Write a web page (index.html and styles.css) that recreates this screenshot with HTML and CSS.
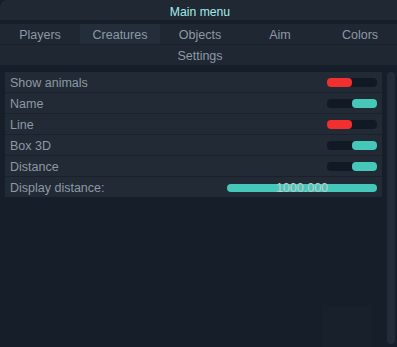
FILE: index.html
```html
<!DOCTYPE html>
<html>
<head>
<meta charset="utf-8">
<link rel="stylesheet" href="styles.css">
</head>
<body>
<div class="window">
  <div class="titlebar">Main menu</div>
  <div class="tabs">
    <div class="tab">Players</div>
    <div class="tab active">Creatures</div>
    <div class="tab">Objects</div>
    <div class="tab">Aim</div>
    <div class="tab">Colors</div>
  </div>
  <div class="subtabs">
    <div class="tab">Settings</div>
  </div>
  <div class="main">
    <div class="panel">
      <div class="row"><span class="label">Show animals</span><span class="toggle off"></span></div>
      <div class="row"><span class="label">Name</span><span class="toggle on"></span></div>
      <div class="row"><span class="label">Line</span><span class="toggle off"></span></div>
      <div class="row"><span class="label">Box 3D</span><span class="toggle on"></span></div>
      <div class="row"><span class="label">Distance</span><span class="toggle on"></span></div>
      <div class="row"><span class="label">Display distance:</span><span class="slider"><span class="slider-value">1000.000</span></span></div>
    </div>
    <div class="scrollbar"></div>
  </div>
  <div class="ghost"></div>
</div>
</body>
</html>
```
FILE: styles.css
```css
html, body {
  margin: 0;
  padding: 0;
  background: #161f29;
  width: 397px;
  height: 347px;
  overflow: hidden;
}
body {
  font-family: "Liberation Sans", Arial, sans-serif;
  font-size: 12.5px;
  color: #8e99a4;
}
.window {
  position: relative;
  width: 397px;
  height: 347px;
}
.titlebar {
  box-sizing: border-box;
  height: 20px;
  line-height: 20px;
  padding-top: 2px;
  background: #1f2833;
  border-top-left-radius: 7px;
  text-align: center;
  color: #a3ece8;
  font-size: 12.2px;
  padding-left: 3px;
}
.tabs {
  margin-top: 4px;
  display: grid;
  grid-template-columns: repeat(5, 80px);
  width: 397px;
  overflow: hidden;
  height: 20px;
  background: #1e2732;
  border-bottom: 1px solid #19212b;
}
.tab {
  box-sizing: border-box;
  text-align: center;
  line-height: 19px;
  padding-top: 2px;
  height: 20px;
  white-space: nowrap;
}
.tab.active {
  background: #232e3a;
}
.subtabs {
  height: 20px;
  background: #1e2732;
  width: 397px;
  overflow: hidden;
}
.subtabs .tab {
  width: 400px;
}
.main {
  display: flex;
  margin-top: 7px;
  padding-left: 5px;
  gap: 5px;
}
.panel {
  width: 377px;
  align-self: flex-start;
  display: flex;
  flex-direction: column;
}
.row {
  height: 20px;
  background: #212a35;
  border-bottom: 1px solid #19222c;
  display: flex;
  align-items: center;
  justify-content: space-between;
  padding: 0 5px;
}
.row:last-child {
  border-bottom: none;
}
.label {
  line-height: 20px;
  padding-top: 1px;
}
.toggle {
  width: 50px;
  height: 9px;
  border-radius: 4px;
  background: #111a24;
  display: flex;
  margin-top: 1px;
}
.toggle::before {
  content: "";
  width: 25px;
  height: 9px;
  border-radius: 4px;
}
.toggle.off::before {
  background: #f22f2f;
}
.toggle.on {
  justify-content: flex-end;
}
.toggle.on::before {
  background: #45c8b9;
}
.slider {
  width: 150px;
  height: 8px;
  border-radius: 4px;
  background: #45c8b9;
  display: flex;
  align-items: center;
  justify-content: center;
  margin-top: 1px;
}
.slider-value {
  color: #c3cacd;
  line-height: 8px;
  font-size: 12.5px;
  padding-top: 1px;
}
.scrollbar {
  width: 8px;
  height: 272px;
  border-radius: 4px;
  background: #222c38;
}
.ghost {
  position: absolute;
  left: 323px;
  top: 305px;
  width: 49px;
  height: 42px;
  background: #18212b;
}
```
